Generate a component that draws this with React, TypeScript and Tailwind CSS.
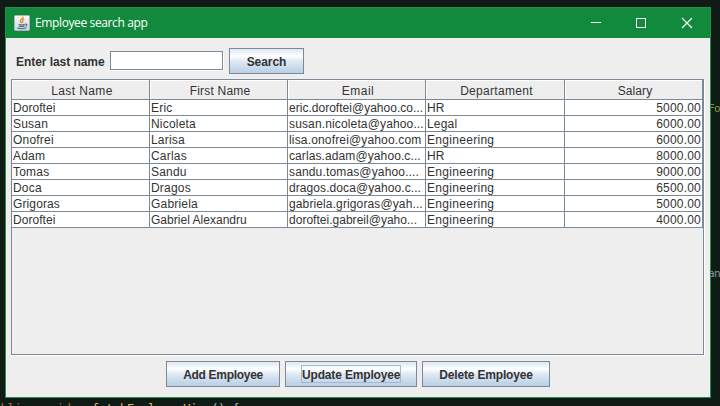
import React from "react";

const columns = [
  { name: "Last Name", spacing: "tracking-[0.38px]" },
  { name: "First Name", spacing: "tracking-[0.2px]" },
  { name: "Email", spacing: "tracking-[0.5px]" },
  { name: "Departament", spacing: "tracking-[0.3px]" },
  { name: "Salary", spacing: "tracking-[0.1px]" },
];

const rows = [
  ["Doroftei", "Eric", "eric.doroftei@yahoo.co...", "HR", "5000.00"],
  ["Susan", "Nicoleta", "susan.nicoleta@yahoo...", "Legal", "6000.00"],
  ["Onofrei", "Larisa", "lisa.onofrei@yahoo.com", "Engineering", "6000.00"],
  ["Adam", "Carlas", "carlas.adam@yahoo.c...", "HR", "8000.00"],
  ["Tomas", "Sandu", "sandu.tomas@yahoo....", "Engineering", "9000.00"],
  ["Doca", "Dragos", "dragos.doca@yahoo.c...", "Engineering", "6500.00"],
  ["Grigoras", "Gabriela", "gabriela.grigoras@yah...", "Engineering", "5000.00"],
  ["Doroftei", "Gabriel Alexandru", "doroftei.gabreil@yaho...", "Engineering", "4000.00"],
];

const spacingByText: Record<string, string> = {
  Doroftei: "tracking-[0.05px]",
  Grigoras: "tracking-[0.12px]",
  "Gabriel Alexandru": "tracking-[0.02px]",
  Engineering: "tracking-[0.3px]",
  "eric.doroftei@yahoo.co...": "tracking-[0.02px]",
  "susan.nicoleta@yahoo...": "tracking-[0.14px]",
  "lisa.onofrei@yahoo.com": "tracking-[0.16px]",
  "carlas.adam@yahoo.c...": "tracking-[0.1px]",
  "sandu.tomas@yahoo....": "tracking-[0.15px]",
  "dragos.doca@yahoo.c...": "tracking-[0.08px]",
  "gabriela.grigoras@yah...": "tracking-[0.12px]",
  "doroftei.gabreil@yaho...": "tracking-[0.02px]",
};

const grid = "grid grid-cols-[138px_138px_138px_139px_138px]";

function JavaIcon() {
  return (
    <svg width="16" height="16" viewBox="0 0 16 16" className="shrink-0">
      <defs>
        <linearGradient id="tile" x1="0" y1="0" x2="0" y2="1">
          <stop offset="0" stopColor="#fbfbfc" />
          <stop offset="1" stopColor="#cfd5df" />
        </linearGradient>
      </defs>
      <rect x="0.5" y="0.5" width="15" height="15" rx="1" fill="url(#tile)" stroke="#a9b5b9" />
      <path d="M9.2 1.700C9.600 3.600 5.900 4.200 6.300 6c.2 1 1 1.300 1.200 2.200M10.200 4.200C8.400 5 8 5.500 8.600 6.400c.4.6.1 1-.3 1.500" fill="none" stroke="#ee8424" strokeWidth="1.300" />
      <path d="M4.600 9.200c1.600.6 4.800.5 6.300 0M5 10.900c1.500.6 4.200.5 5.500 0M3.300 12.900c2.200 1 7.200.9 9.200-.1M11.200 9.200c2.200-.5 2.400 1.500.2 2.200" fill="none" stroke="#4f7394" strokeWidth="1.200" />
    </svg>
  );
}

function Button({ label, width, spacing, focused }: { label: string; width: string; spacing: string; focused?: boolean }) {
  return (
    <button
      className={`flex h-[26px] ${width} shrink-0 items-center justify-center border border-[#7a8a99] bg-[linear-gradient(to_bottom,#dde8f3_0%,#ffffff_30%,#dfe9f4_50%,#b8cfe5_100%)] text-[12px] font-bold text-[#333333]`}
    >
      <span className={`block h-[18px] whitespace-nowrap border leading-[18px] ${focused ? "w-[100px] border-[#a3b8cc]" : "border-transparent"} ${spacing}`}>
        {label}
      </span>
    </button>
  );
}

export default function App() {
  return (
    <div className="relative h-[406px] w-[720px] overflow-hidden bg-[#101b15] pl-[5px] pt-[7px] font-['Liberation_Sans',Arial,sans-serif] text-[12px] text-[#333333]">
      <span className="absolute left-[708px] top-[102px] font-['DejaVu_Sans_Mono',monospace] text-[11px] leading-[14px] tracking-[-0.6px] text-[#829d48]">Fo</span>
      <span className="absolute left-[708px] top-[267px] font-['DejaVu_Sans_Mono',monospace] text-[11px] leading-[14px] tracking-[-0.6px] text-[#8798a5]">an</span>
      <div className="absolute left-[0.5px] top-[402px] whitespace-pre font-['DejaVu_Sans_Mono',monospace] text-[12px] leading-[14px] tracking-[-0.2px] text-[#b9703e]">
        {"blic  void   "}
        <span className="text-[#e2b25f]">fetchEmployeeView</span>
        <span className="text-[#a9b7c6]">() {"{"}</span>
      </div>

      <div className="relative flex h-[391px] w-[706px] flex-col border border-[#24904c] bg-[#eeeeee]">
        <header className="flex h-[30px] shrink-0 items-center bg-[#118a3d] text-white">
          <div className="flex flex-1 items-center gap-[5px] pl-2">
            <JavaIcon />
            <span className="font-['Open_Sans',sans-serif] text-[12px] tracking-[-0.38px]">Employee search app</span>
          </div>
          <div className="flex w-[120px] shrink-0 items-center pr-[17px]">
            <svg width="12" height="12" viewBox="0 0 12 12" className="mr-auto" shapeRendering="crispEdges"><path d="M1 5.500h10" stroke="white" /></svg>
            <svg width="12" height="12" viewBox="0 0 12 12" className="mr-[34px]" shapeRendering="crispEdges"><rect x="1.500" y="1.500" width="9" height="9" fill="none" stroke="white" /></svg>
            <svg width="12" height="12" viewBox="0 0 12 12"><path d="m1 1 10 10M11 1 1 11" stroke="white" strokeWidth="1.150" /></svg>
          </div>
        </header>

        <div className="flex h-[41px] shrink-0 pl-[10px] pt-[10px]">
          <label className="mt-[6px] w-[94px] whitespace-nowrap font-bold leading-[16px] tracking-[-0.05px]">Enter last name</label>
          <input className="mt-[3px] h-[19px] w-[113px] border border-[#7a8a99] bg-white shadow-[1px_1px_0_#fff] outline-none" />
          <div className="w-[6px]" />
          <Button label="Search" width="w-[75px]" spacing="tracking-[-0.05px]" />
        </div>

        <main className="ml-[5px] flex h-[276px] w-[693px] shrink-0 flex-col border border-[#7a8a99] shadow-[1px_1px_0_#fff]">
          <div className={`${grid} h-[20px] shrink-0`}>
            {columns.map((column) => (
              <div key={column.name} className={`border-b border-r border-[#7a8a99] pl-[3px] pt-[3px] text-center leading-[16px] shadow-[inset_1px_1px_0_#fff] ${column.spacing}`}>
                {column.name}
              </div>
            ))}
          </div>
          {rows.map((row, index) => (
            <div key={index} className={`${grid} h-[16px] shrink-0 bg-white`}>
              {row.map((value, col) => (
                <div
                  key={col}
                  className={`overflow-hidden whitespace-nowrap border-b border-r border-[#7a8a99] pl-px leading-[16px] ${col === 4 ? "pr-px text-right" : ""} ${spacingByText[value] ?? "tracking-[0.2px]"}`}
                >
                  {value}
                </div>
              ))}
            </div>
          ))}
        </main>

        <footer className="flex gap-[5px] pl-[160px] pt-[6px]">
          <Button label="Add Employee" width="w-[114px]" spacing="tracking-[-0.3px]" />
          <Button label="Update Employee" width="w-[132px]" spacing="tracking-[-0.16px]" focused />
          <Button label="Delete Employee" width="w-[128px]" spacing="tracking-[-0.18px]" />
        </footer>
      </div>
    </div>
  );
}
